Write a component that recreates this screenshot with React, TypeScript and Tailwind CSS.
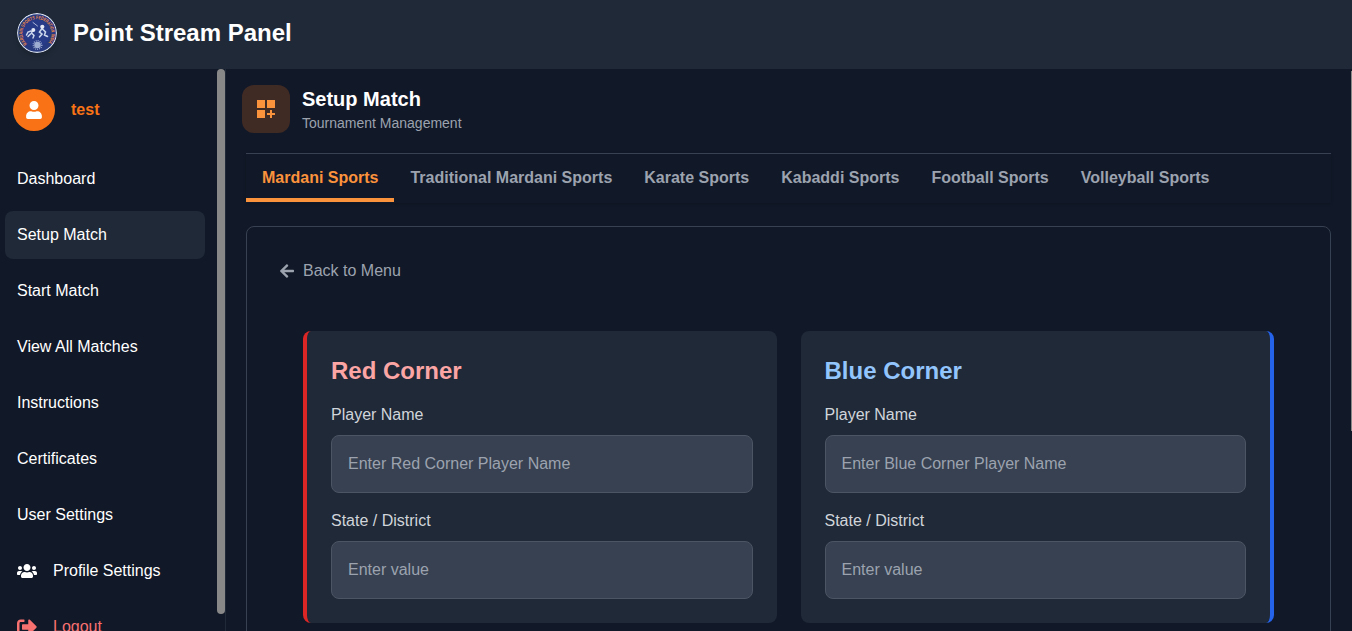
import React from "react";
import { FaUser, FaUsers, FaSignOutAlt, FaArrowLeft } from "react-icons/fa";
import { MdDashboardCustomize } from "react-icons/md";

const navItems = [
  "Dashboard",
  "Setup Match",
  "Start Match",
  "View All Matches",
  "Instructions",
  "Certificates",
  "User Settings",
];

const tabs = [
  "Mardani Sports",
  "Traditional Mardani Sports",
  "Karate Sports",
  "Kabaddi Sports",
  "Football Sports",
  "Volleyball Sports",
];

function Logo() {
  return (
    <svg viewBox="0 0 40 40" className="size-10 shrink-0 rounded-full shadow-md">
      <circle cx="20" cy="20" r="19.4" fill="#27397f" stroke="#dbe2ee" strokeWidth="1.1" />
      <defs>
        <path id="ring" d="M10 31 A14.4 14.4 0 1 1 30 31" />
      </defs>
      <text fill="#f28a48" fontSize="5" fontWeight="700" fontFamily="Liberation Sans, sans-serif">
        <textPath href="#ring" textLength="66" lengthAdjust="spacingAndGlyphs">
          MARDANI SPORTS FEDERATION INDIA
        </textPath>
      </text>
      <circle cx="20" cy="20" r="13.4" fill="#283b88" />
      <g stroke="#cbd5eb" strokeLinecap="round" fill="none">
        <path d="M16 9.5 20.5 13" strokeWidth="0.8" />
        <path d="M16 17 14.5 20 17 22.5 16 25M14 18 11 19 9.5 22M13.5 21 11 23.5" strokeWidth="1.5" />
        <path d="M25 15.5 22.5 19 25 21 22.5 24M26 16.5 28.5 19 27.5 22 30.5 23.5" strokeWidth="1.6" />
      </g>
      <circle cx="16.3" cy="17" r="2" fill="#e3e8f4" />
      <circle cx="25.3" cy="13.8" r="2.1" fill="#e3e8f4" />
      <circle cx="20.5" cy="32" r="3.3" fill="#9dacd1" />
      <circle cx="20.5" cy="32" r="4.3" fill="none" stroke="#b6c3df" strokeWidth="1.3" strokeDasharray="0.8 1.2" />
    </svg>
  );
}

function Field({ label, placeholder }: { label: string; placeholder: string }) {
  return (
    <label className="block">
      <span className="mb-2 block text-base leading-6 text-[#d1d5db]">{label}</span>
      <input
        className="block h-[58px] w-full rounded-lg border border-[#4b5563] bg-[#374151] px-4 text-base text-white outline-none placeholder:text-[#9ca3af]"
        placeholder={placeholder}
      />
    </label>
  );
}

function Corner({ title, color }: { title: string; color: "red" | "blue" }) {
  const edge = color === "red" ? "border-l-4 border-[#dc2626]" : "border-r-4 border-[#2563eb]";
  const heading = color === "red" ? "text-[#fca5a5]" : "text-[#93c5fd]";
  return (
    <section className={`h-[292px] rounded-lg bg-[#1f2937] p-6 ${edge}`}>
      <h2 className={`mb-4 text-2xl leading-8 font-bold ${heading}`}>{title}</h2>
      <div className="flex flex-col gap-4">
        <Field label="Player Name" placeholder={`Enter ${title} Player Name`} />
        <Field label="State / District" placeholder="Enter value" />
      </div>
    </section>
  );
}

export default function App() {
  return (
    <div className="flex h-[631px] w-full flex-col overflow-hidden bg-[#111827] font-['Liberation_Sans',Arial,sans-serif] text-white">
      <header className="flex h-[69px] shrink-0 items-center gap-4 bg-[#1f2937] pb-1 pl-[17px]">
        <Logo />
        <h1 className="text-2xl leading-8 font-bold">Point Stream Panel</h1>
      </header>

      <div className="flex min-h-0 flex-1">
        <aside className="flex w-[226px] shrink-0 border-r border-[#1f2937]">
          <div className="w-[217px] shrink-0 overflow-hidden">
            <div className="mt-5 mb-6 flex items-center gap-4 pl-[13px]">
              <div className="flex size-[42px] items-center justify-center rounded-full bg-[#f97316]">
                <FaUser size={18} />
              </div>
              <span className="font-bold text-[#f97316]">test</span>
            </div>
            <nav className="flex flex-col gap-2 pr-3 pl-[5px]">
              {navItems.map((item) => (
                <a
                  key={item}
                  className={`flex h-12 items-center rounded-lg pl-3 ${item === "Setup Match" ? "bg-[#1f2937]" : ""}`}
                >
                  {item}
                </a>
              ))}
              <a className="flex h-12 items-center gap-4 pl-3">
                <FaUsers size={20} />
                <span>Profile Settings</span>
              </a>
              <a className="flex h-12 shrink-0 items-center gap-4 pl-3 text-[#f87171]">
                <FaSignOutAlt size={20} />
                <span>Logout</span>
              </a>
            </nav>
          </div>
          <div className="h-[545px] w-2 shrink-0 rounded-full bg-[#888888]" />
        </aside>

        <main className="min-w-0 flex-1 overflow-hidden">
          <div className="flex items-center gap-3 pt-4 pl-4">
            <div className="flex size-12 items-center justify-center rounded-xl bg-[#402a24] text-[#fb923c]">
              <MdDashboardCustomize size={24} />
            </div>
            <div>
              <h2 className="text-xl leading-7 font-bold">Setup Match</h2>
              <p className="text-sm leading-5 text-[#9ca3af]">Tournament Management</p>
            </div>
          </div>

          <div className="mt-5 mr-5 ml-5">
            <div className="flex h-[50px] border-t border-[#374151] shadow-sm">
              {tabs.map((tab, i) => (
                <button
                  key={tab}
                  className={`h-12 border-b-4 px-4 pt-1 text-base font-bold whitespace-nowrap ${
                    i === 0 ? "border-[#fb923c] text-[#fb923c]" : "border-transparent text-[#9ca3af]"
                  }`}
                >
                  {tab}
                </button>
              ))}
            </div>

            <div className="mt-[23px] h-[700px] rounded-lg border border-[#374151] pt-8 pr-14 pl-8">
              <button className="flex items-center gap-2 text-[#9ca3af]">
                <FaArrowLeft size={16} />
                <span className="leading-6">Back to Menu</span>
              </button>
              <div className="mt-12 ml-6 grid grid-cols-2 gap-6">
                <Corner title="Red Corner" color="red" />
                <Corner title="Blue Corner" color="blue" />
              </div>
            </div>
          </div>
        </main>
        <div className="mt-0.5 h-[360px] w-px shrink-0 bg-[#888888]" />
      </div>
    </div>
  );
}
